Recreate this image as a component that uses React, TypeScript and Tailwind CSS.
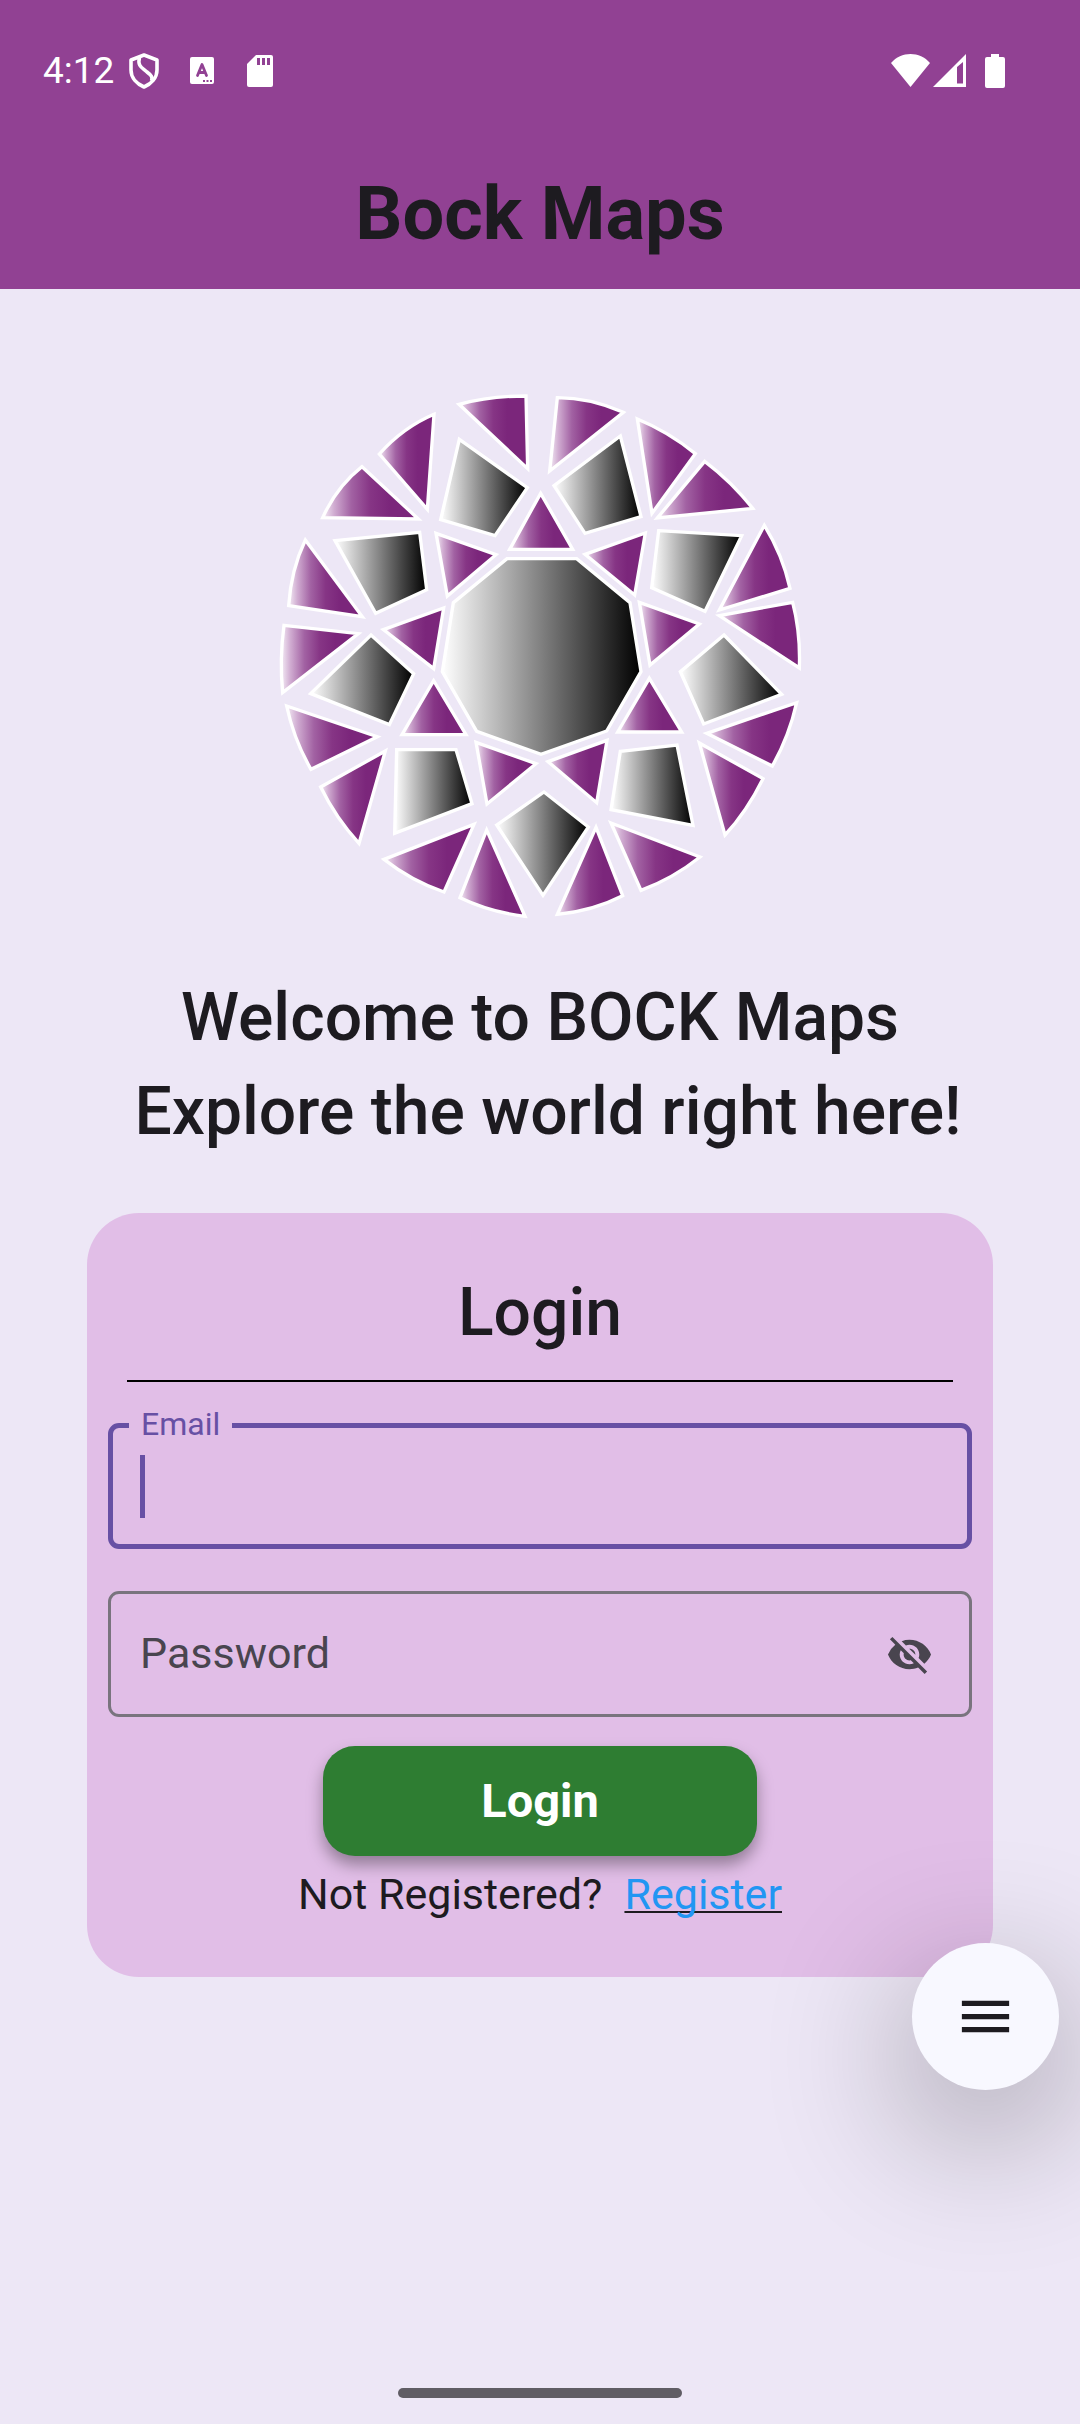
import { useId, useState } from "react";
import { MdMenu, MdVisibility, MdVisibilityOff } from "react-icons/md";

const OUTER_PETALS = [
  "M567 73 Q660 48 768 48 L773 266Z",
  "M328 222 Q400 142 492 103 L472 388Z",
  "M276 260 Q200 320 158 413 L445 417Z",
  "M106 480 Q63 570 56 677 L277 710Z",
  "M42 736 L265 761 L38 938 Q28 840 42 736Z",
  "M50 978 L322 1070 L123 1168 Q72 1080 50 978Z",
  "M152 1221 L346 1113 L267 1390 Q198 1315 152 1221Z",
  "M342 1438 L612 1333 L522 1536 Q425 1503 342 1438Z",
  "M650 1350 L570 1553 Q660 1596 765 1609Z",
  "M978 1342 L862 1603 Q970 1592 1058 1547Z",
  "M1023 1329 L1290 1431 Q1210 1495 1113 1531Z",
  "M1288 1089 L1479 1196 Q1430 1295 1365 1365Z",
  "M1310 1060 L1580 968 Q1557 1070 1507 1158Z",
  "M1348 707 L1568 667 Q1592 760 1588 864Z",
  "M1483 436 Q1538 525 1560 625 L1348 690Z",
  "M1304 244 Q1385 305 1448 385 L1162 414Z",
  "M1102 117 Q1195 155 1276 221 L1146 400Z",
  "M862 53 Q960 53 1060 97 L839 273Z",
];

const INNER_TRIANGLES = [
  "M812 340 L719 508 L908 508Z",
  "M498 460 L678 524 L532 648Z",
  "M945 523 L1126 459 L1094 645Z",
  "M1108 667 L1288 732 L1140 855Z",
  "M340 749 L521 684 L491 866Z",
  "M491 902 L396 1064 L588 1064Z",
  "M618 1087 L798 1151 L651 1272Z",
  "M834 1145 L1011 1081 L980 1268Z",
  "M1138 895 L1043 1056 L1235 1056Z",
];

const FACETS = [
  "M568 178 L772 323 L675 467 L512 419Z",
  "M195 482 L449 457 L470 629 L317 700Z",
  "M303 765 L431 881 L358 1034 L122 941Z",
  "M380 1109 L558 1109 L606 1271 L374 1360Z",
  "M680 1335 L822 1236 L955 1341 L819 1546Z",
  "M1051 1114 L1221 1095 L1269 1336 L1023 1289Z",
  "M1362 765 L1535 943 L1301 1032 L1231 875Z",
  "M1166 452 L1415 467 L1305 694 L1145 623Z",
  "M1051 168 L1113 410 L945 460 L852 317Z",
  "M711 536 L920 536 L1080 668 L1113 875 L1010 1053 L813 1123 L620 1054 L517 875 L550 668Z",
];

function GemLogo() {
  return (
    <svg viewBox="0 0 1620 1650" className="mx-auto block w-1/2" role="img" aria-label="Bock Maps logo">
      <defs>
        <linearGradient id="gem-purple">
          <stop offset="0" stopColor="#f4ecf5" />
          <stop offset="0.12" stopColor="#d0acd1" />
          <stop offset="0.3" stopColor="#a262a3" />
          <stop offset="0.5" stopColor="#863585" />
          <stop offset="0.7" stopColor="#7b267b" />
          <stop offset="1" stopColor="#7b267b" />
        </linearGradient>
        <linearGradient id="gem-black">
          <stop offset="0" stopColor="#ffffff" />
          <stop offset="1" stopColor="#000000" />
        </linearGradient>
      </defs>
      <g stroke="#ffffff" strokeWidth="10" strokeMiterlimit="10">
        <g fill="url(#gem-purple)">
          {[...OUTER_PETALS, ...INNER_TRIANGLES].map((d) => (
            <path key={d} d={d} />
          ))}
        </g>
        <g fill="url(#gem-black)">
          {FACETS.map((d) => (
            <path key={d} d={d} />
          ))}
        </g>
      </g>
    </svg>
  );
}

function StatusBar() {
  return (
    <div className="flex h-[139px] items-center pt-[2px] pr-[75px] pl-[43px] text-white">
      <span className="w-[86px] text-[37px] leading-none">4:12</span>
      <svg viewBox="0 0 30 36" className="h-9 w-[30px]" fill="none" stroke="currentColor" aria-hidden="true">
        <path d="M15 2 L28 7 V17 C28 25 22 31 15 34 C8 31 2 25 2 17 V7Z" strokeWidth="3.6" strokeLinejoin="round" />
        <path d="M10.5 4 C8 14 14 15 18 19 C22 22 24 24 22.5 28" strokeWidth="3.6" />
      </svg>
      <svg viewBox="0 0 24 27" className="ml-[31px] h-[27px] w-6" aria-hidden="true">
        <rect width="24" height="27" rx="2" fill="currentColor" />
        <path d="M7.5 18.5 L12 7.5 L16.5 18.5 M9 15.5 H15" fill="none" stroke="#914193" strokeWidth="2.8" strokeLinecap="round" strokeLinejoin="round" />
        <path d="M13 23h2v2h-2z M16.500 23h2v2h-2z M20 23h2v2h-2z" fill="#914193" />
      </svg>
      <svg viewBox="0 0 26 32" className="ml-[33px] h-8 w-[26px]" aria-hidden="true">
        <path d="M9 0 H24 Q26 0 26 2 V30 Q26 32 24 32 H2 Q0 32 0 30 V9Z" fill="currentColor" />
        <path d="M10 3h3v7h-3z M15 3h3v7h-3z M20 3h3v7h-3z" fill="#914193" />
      </svg>
      <svg viewBox="0 0 39 33" className="ml-auto h-[33px] w-[39px]" fill="currentColor" aria-hidden="true">
        <path d="M19.500 33 L0 9 C10 -3 29 -3 39 9Z" />
      </svg>
      <svg viewBox="0 0 33 33" className="ml-[3px] h-[33px] w-[33px]" fill="currentColor" fillRule="evenodd" aria-hidden="true">
        <path d="M33 0 V33 H0Z M24 13 V29.500 H30 V8Z" />
      </svg>
      <svg viewBox="0 0 20 34" className="ml-[19px] h-[34px] w-5" fill="currentColor" aria-hidden="true">
        <path d="M6 0 H14 V3 H18 Q20 3 20 5 V32 Q20 34 18 34 H2 Q0 34 0 32 V5 Q0 3 2 3 H6Z" />
      </svg>
    </div>
  );
}

function LoginCard() {
  const emailId = useId();
  const passwordId = useId();
  const [email, setEmail] = useState("");
  const [password, setPassword] = useState("");
  const [visible, setVisible] = useState(false);

  return (
    <form
      className="mx-[87px] mt-[53px] rounded-[52px] bg-[#e1bee7] px-[21px] pt-[53px] pb-[58px]"
      onSubmit={(e) => e.preventDefault()}
    >
      <h2 className="text-center text-[66px] leading-[94px] font-medium">Login</h2>
      <hr className="mx-[19px] mt-[20px] border-t-2 border-black" />

      <div className="relative mt-[41px] flex h-[126px] items-center rounded-[11px] border-[5px] border-[#6750a4] pr-7 pl-[27px]">
        <label
          htmlFor={emailId}
          className="absolute -top-[22px] left-4 bg-[#e1bee7] px-3 text-[32px] leading-9 text-[#6750a4]"
        >
          Email
        </label>
        {email === "" && <span className="h-[63px] w-[5px] shrink-0 bg-[#6750a4]" />}
        <input
          id={emailId}
          type="email"
          value={email}
          onChange={(e) => setEmail(e.target.value)}
          className="h-full w-full bg-transparent text-[43px] caret-[#6750a4] outline-none"
        />
      </div>

      <div className="mt-[42px] flex h-[126px] items-center rounded-[11px] border-[3px] border-[#79747e] pr-[36px] pl-[29px]">
        {password === "" && (
          <label htmlFor={passwordId} className="pb-[3px] text-[43px] leading-[50px] text-[#49454f]">
            Password
          </label>
        )}
        <input
          id={passwordId}
          type={visible ? "text" : "password"}
          value={password}
          onChange={(e) => setPassword(e.target.value)}
          className="h-full min-w-0 flex-1 bg-transparent text-[43px] outline-none"
        />
        <button
          type="button"
          aria-label={visible ? "Hide password" : "Show password"}
          onClick={() => setVisible(!visible)}
          className="text-[#49454f]"
        >
          {visible ? <MdVisibility size={47} /> : <MdVisibilityOff size={47} />}
        </button>
      </div>

      <button
        type="submit"
        className="mx-auto mt-[29px] block h-[110px] w-[434px] rounded-[32px] bg-[#2e7d32] text-[47px] font-bold text-white shadow-[0_9px_16px_rgba(0,0,0,0.35)]"
      >
        Login
      </button>

      <p className="mt-[13px] flex justify-center gap-[22px] text-[43px] leading-[50px]">
        Not Registered?
        <a
          href="#register"
          className="text-[#2196f3] underline decoration-[#1d1b20] decoration-2 underline-offset-2 [text-decoration-skip-ink:none]"
        >
          Register
        </a>
      </p>
    </form>
  );
}

export default function App() {
  return (
    <div className="relative flex min-h-screen flex-col overflow-hidden bg-[#ede7f6] font-[Roboto,sans-serif] text-[#1d1b20]">
      <header className="bg-[#914193]">
        <StatusBar />
        <h1 className="text-center text-[74px] leading-[150px] font-bold">Bock Maps</h1>
      </header>

      <main className="pt-[91px]">
        <GemLogo />
        <div className="mt-[41px] mb-[54px] text-center text-[66px] leading-[94px] font-medium">
          <p>Welcome to BOCK Maps</p>
          <p className="pl-4">Explore the world right here!</p>
        </div>
        <LoginCard />
      </main>

      <button
        type="button"
        aria-label="Open menu"
        className="absolute right-[21px] bottom-[334px] flex size-[147px] items-center justify-center rounded-full bg-[#f8f8ff] shadow-[0_40px_140px_10px_rgba(0,0,0,0.3)]"
      >
        <MdMenu size={63} />
      </button>

      <div className="mx-auto mt-auto mb-[26px] h-[10px] w-[284px] rounded-full bg-[#605d64]" />
    </div>
  );
}
